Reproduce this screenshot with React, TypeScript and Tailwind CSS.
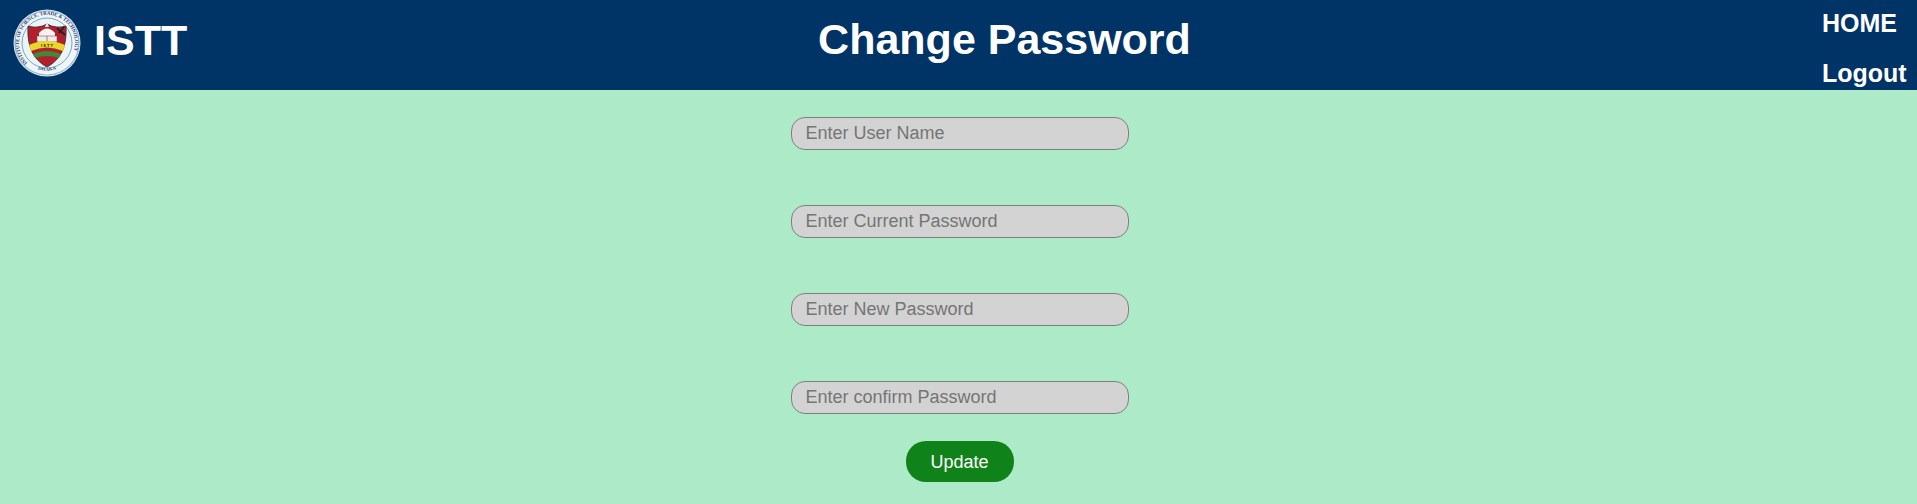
import React from "react";

function Seal() {
  return (
    <svg viewBox="0 0 68 68" className="h-[68px] w-[68px] shrink-0">
      <defs>
        <path id="sealTop" d="M 14.5 54 A 28 28 0 1 1 53.5 54" />
        <path id="sealBottom" d="M 13 53 A 30 30 0 0 0 55 53" />
      </defs>
      <circle cx="34" cy="34" r="33.5" fill="#dfe8ee" />
      <circle cx="34" cy="34" r="32" fill="#f2f5f7" stroke="#8fbdd2" strokeWidth="1.2" />
      <text fontSize="5" fontWeight="700" fill="#2a3570" fontFamily="'Liberation Serif', serif">
        <textPath href="#sealTop" textLength="118" lengthAdjust="spacing">INSTITUTE OF SCIENCE, TRADE &amp; TECHNOLOGY</textPath>
      </text>
      <text fontSize="5" fontWeight="700" fill="#2a3570" fontFamily="'Liberation Serif', serif">
        <textPath href="#sealBottom" startOffset="50%" textAnchor="middle">DHAKA</textPath>
      </text>
      <circle cx="34" cy="34" r="25" fill="#eef3f6" stroke="#5fb0c6" strokeWidth="1" />
      <path d="M15 17 Q25 20 34 15 Q43 20 53 17 C54 36 49 50 34 58 C19 50 14 36 15 17 Z" fill="#b3202c" stroke="#2b2b35" strokeWidth="0.8" />
      <path d="M34 13 L36 18 L32 18 Z" fill="#e8e8e8" />
      <path d="M26 24 Q34 15 42 24 L42 27 L26 27 Z" fill="#f4f4f4" />
      <path d="M24 27 h20 v6 h-20 Z" fill="#ececec" stroke="#7a3540" strokeWidth="0.5" />
      <path d="M34 27 v6" stroke="#7a3540" strokeWidth="0.6" />
      <path d="M44 19 L52 26 M51 18 L46 24" stroke="#222" strokeWidth="1.8" />
      <path d="M16 36 Q34 28 52 36 L50 42 Q34 35 18 42 Z" fill="#e8d62a" />
      <path d="M20 45 Q34 39 48 45 L46 49 Q34 45 22 49 Z" fill="#3f8a3a" />
      <text x="34" y="38" fontSize="4" fontWeight="700" fill="#222" textAnchor="middle" fontFamily="'Liberation Sans', sans-serif">I S T T</text>
    </svg>
  );
}

const fields = [
  "Enter User Name",
  "Enter Current Password",
  "Enter New Password",
  "Enter confirm Password",
];

export default function App() {
  return (
    <div className="flex h-[504px] flex-col overflow-hidden bg-[#adebc8] font-['Liberation_Sans',Arial,sans-serif]">
      <header className="flex h-[90px] shrink-0 justify-between bg-[#003366] text-white">
        <div className="flex w-[280px] items-start gap-[13px] pt-[9px] pl-[13px]">
          <Seal />
          <span className="mt-[6px] text-[43px] leading-[50px] font-bold">ISTT</span>
        </div>
        <h1 className="pt-[14px] text-[43px] leading-[50px] font-bold">Change Password</h1>
        <nav className="flex w-[188px] flex-col items-start gap-[18px] pt-[7px] pl-[93px] text-[25px] leading-[32px] font-bold">
          <a>HOME</a>
          <a>Logout</a>
        </nav>
      </header>
      <main className="flex flex-col items-center pt-[27px] pl-[2px]">
        <form className="flex flex-col items-center gap-[55px]">
          {fields.map((f) => (
            <input
              key={f}
              placeholder={f}
              className="h-[33px] w-[338px] rounded-[14px] border border-[#7f7f7f] bg-[#d3d3d3] px-[14px] text-lg placeholder:text-[#757575]"
            />
          ))}
        </form>
        <button className="mt-[27px] h-[41px] w-[108px] rounded-[20px] bg-[#0f831a] text-lg text-white">
          Update
        </button>
      </main>
    </div>
  );
}
